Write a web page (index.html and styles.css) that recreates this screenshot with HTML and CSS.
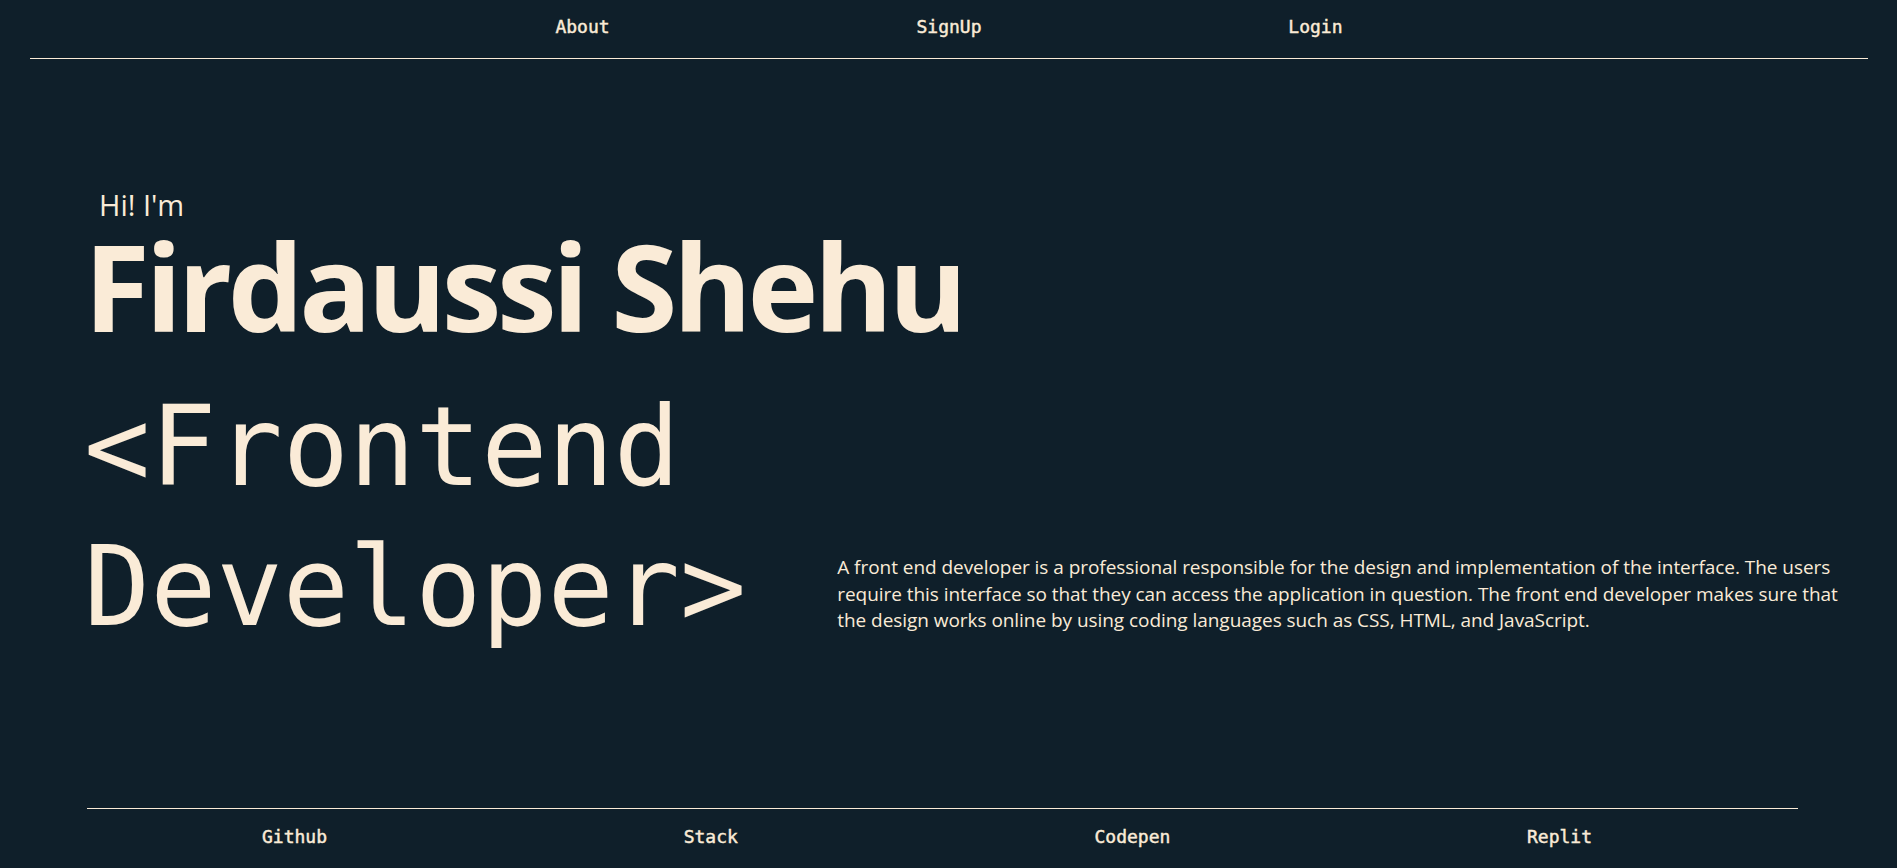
FILE: index.html
```html
<!DOCTYPE html>
<html lang="en">
<head>
<meta charset="utf-8">
<title>Firdaussi Shehu</title>
<link rel="stylesheet" href="styles.css">
</head>
<body>
<header class="site-header">
  <nav class="nav">
    <ul class="nav-list">
      <li><a class="nav-link" href="#">About</a></li>
      <li><a class="nav-link" href="#">SignUp</a></li>
      <li><a class="nav-link" href="#">Login</a></li>
    </ul>
  </nav>
</header>
<main class="hero">
  <p class="greeting">Hi! I'm</p>
  <h1 class="name">Firdaussi Shehu</h1>
  <div class="intro-row">
    <h2 class="role">&lt;Frontend<br>Developer&gt;</h2>
    <p class="about">A front end developer is a professional responsible for the design and implementation of the interface. The users require this interface so that they can access the application in question. The front end developer makes sure that the design works online by using coding languages such as CSS, HTML, and JavaScript.</p>
  </div>
</main>
<footer class="site-footer">
  <ul class="footer-list">
    <li><a class="nav-link" href="#">Github</a></li>
    <li><a class="nav-link" href="#">Stack</a></li>
    <li><a class="nav-link" href="#">Codepen</a></li>
    <li><a class="nav-link" href="#">Replit</a></li>
  </ul>
</footer>
</body>
</html>
```
FILE: styles.css
```css
* { box-sizing: border-box; }

html, body {
  margin: 0;
  padding: 0;
}

body {
  background: #0f1f2a;
  color: #faebd7;
  font-family: "Open Sans", "Noto Sans", sans-serif;
  height: 868px;
  overflow: hidden;
}

.site-header {
  margin: 0 29px 0 30px;
  padding: 16px 0 20px;
  border-bottom: 1px solid #faebd7;
}

.nav-list,
.footer-list {
  list-style: none;
  margin: 0;
  padding: 0;
  display: flex;
}

.nav-list {
  width: 1094px;
  margin: 0 auto;
  justify-content: space-around;
}

.footer-list {
  justify-content: space-between;
  padding: 0 206px 0 175px;
}

.nav-link {
  font-family: "DejaVu Sans Mono", monospace;
  font-weight: 400;
  font-size: 18px;
  line-height: 21px;
  color: #faebd7;
  text-decoration: none;
  -webkit-text-stroke: 0.45px #faebd7;
}

.hero {
  padding: 128px 45px 0 84px;
  height: 749px;
}

.greeting {
  margin: 0 0 0 15px;
  font-size: 29px;
  line-height: 35px;
  font-weight: 400;
}

.name {
  margin: 4px 0 0;
  font-size: 120px;
  line-height: 120px;
  font-weight: 700;
  letter-spacing: -4.4px;
}

.intro-row {
  display: flex;
  align-items: flex-end;
  margin-top: 31px;
}

.role {
  margin: 0;
  font-family: "DejaVu Sans Mono", monospace;
  font-weight: 400;
  font-size: 110px;
  line-height: 140px;
  white-space: nowrap;
}

.about {
  flex: 1;
  margin: 0 0 23px 91px;
  font-size: 19px;
  line-height: 26.7px;
  letter-spacing: -0.05px;
}

.site-footer {
  margin: 0 99px 0 87px;
  padding-top: 17px;
  border-top: 1px solid #faebd7;
}
```
